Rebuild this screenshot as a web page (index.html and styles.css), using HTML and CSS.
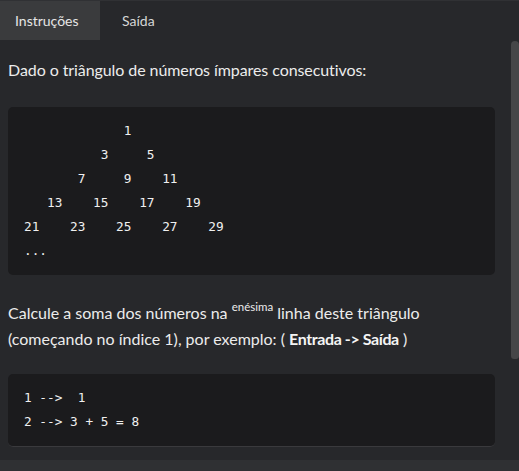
FILE: index.html
```html
<!DOCTYPE html>
<html lang="pt">
<head>
<meta charset="utf-8">
<link rel="stylesheet" href="styles.css">
</head>
<body>
<div class="app">
  <div class="tabs">
    <div class="tab tab-active">Instruções</div>
    <div class="tab tab-second">Saída</div>
  </div>
  <div class="body">
    <div class="content">
      <p class="p-first">Dado o triângulo de números ímpares consecutivos:</p>
      <pre class="code code-first">             1
          3     5
       7     9    11
   13    15    17    19
21    23    25    27    29
...</pre>
      <p class="p-second">Calcule a soma dos números na <sup>enésima</sup> linha deste triângulo (começando no índice 1), por exemplo: ( <strong>Entrada -&gt; Saída</strong> )</p>
      <pre class="code code-second">1 -->  1
2 --> 3 + 5 = 8</pre>
    </div>
    <div class="scrollbar"><div class="thumb"></div></div>
  </div>
  <div class="footer"></div>
</div>
</body>
</html>
```
FILE: styles.css
```css
html, body {
  margin: 0;
  padding: 0;
  background: #27282b;
  height: 100%;
  overflow: hidden;
}
.app {
  display: flex;
  flex-direction: column;
  height: 471px;
  font-family: Lato, "Open Sans", sans-serif;
  color: #ececec;
  border-top: 1px solid #303134;
  box-sizing: border-box;
}
.tabs {
  display: flex;
  height: 39px;
  flex: none;
}
.tab {
  display: flex;
  align-items: center;
  font-size: 14px;
  height: 100%;
  box-sizing: border-box;
}
.tab-active {
  width: 100px;
  padding-left: 15px;
  background: #3a3b3d;
  color: #e6e6e6;
}
.tab-second {
  padding-left: 22px;
  color: #d6d6d6;
}
.body {
  flex: 1;
  display: flex;
  min-height: 0;
}
.content {
  flex: 1;
  padding: 0 16px 0 8px;
  overflow: hidden;
}
.p-first {
  margin: 17px 0 0;
  font-size: 16px;
  line-height: 26px;
  letter-spacing: -0.08px;
}
.code {
  background: #1b1b1d;
  border-radius: 5px;
  padding: 12px 16px;
  margin: 0;
  font-family: "DejaVu Sans Mono", monospace;
  font-size: 12.75px;
  line-height: 24px;
  color: #f0f0f0;
}
.code-first {
  margin-top: 24px;
  height: 144px;
}
.code-second {
  margin-top: 22px;
  border-bottom: 1px solid #3a3a3d;
  height: 48px;
  box-sizing: content-box;
}
.p-second {
  margin: 25px 0 0;
  font-size: 16px;
  line-height: 26px;
}
.p-second sup {
  font-size: 11.5px;
  line-height: 0;
  vertical-align: 8px;
}
.p-second strong {
  font-weight: 700;
  color: #f4f4f4;
  letter-spacing: -0.4px;
}
.scrollbar {
  width: 8px;
  flex: none;
  padding-top: 1px;
}
.thumb {
  height: 318px;
  background: #464648;
  border-radius: 4px 4px 3px 3px;
}
.footer {
  height: 11px;
  flex: none;
  background: #2f3033;
}
```
